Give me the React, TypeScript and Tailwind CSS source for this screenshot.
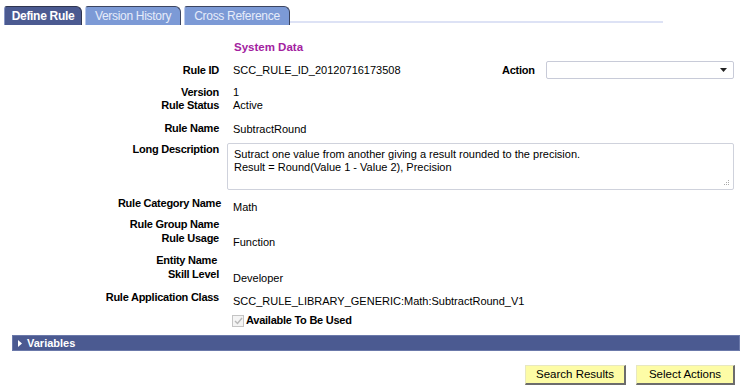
import React from "react";

const font = { fontFamily: '"Liberation Sans", Arial, sans-serif' };

function Label({ children, w = "w-[219px]" }: { children: React.ReactNode; w?: string }) {
  return (
    <div className={`${w} shrink-0 text-right font-bold text-[11px] leading-[13px] tracking-[-0.25px] text-black`}>
      {children}
    </div>
  );
}

function Tab({ label, active, w }: { label: string; active?: boolean; w: string }) {
  return (
    <div
      className={`${w} h-[19px] flex items-center justify-center whitespace-nowrap rounded-tr-[6px] rounded-tl-[3px] border-t border-r border-l text-[12px] tracking-[-0.3px] ${
        active
          ? "bg-[#4b5a91] border-t-[#2f3550] border-r-[#2f3550] border-l-[#8896c4] text-white font-bold"
          : "bg-[#7c9ad6] border-t-[#3c4560] border-r-[#3c4560] border-l-[#b8c8ee] text-[#e6ecfa]"
      }`}
    >
      {label}
    </div>
  );
}

export default function App() {
  return (
    <div className="w-[744px] h-[389px] bg-white text-black overflow-hidden" style={font}>
      {/* Tabs */}
      <div className="flex items-end pt-[4px] pl-[4px] h-[25px]">
        <div className="flex gap-[3px] items-end">
          <Tab label="Define Rule" active w="w-[78px]" />
          <Tab label="Version History" w="w-[96px]" />
          <Tab label="Cross Reference" w="w-[106px]" />
        </div>
        <div className="w-[373px] h-[2px] bg-[#dde2f5] mb-[2px]" />
      </div>

      {/* System Data */}
      <div className="mt-[15px] h-[14px] pl-[234px] text-[11.5px] leading-[14px] font-bold text-[#a3229f]">System Data</div>

      {/* Rule ID row */}
      <div className="mt-[7px] h-[18px] flex items-center">
        <Label>Rule ID</Label>
        <div className="ml-[14px] w-[269px] text-[11px] leading-[13px]">SCC_RULE_ID_20120716173508</div>
        <div className="w-[33px] font-bold text-[11px] leading-[13px] tracking-[-0.25px]">Action</div>
        <div className="ml-[11px] w-[188px] h-[18px] border border-[#c8cbd8] rounded-[2px] bg-white flex items-center justify-end pr-[6px]">
          <svg width="7" height="4" viewBox="0 0 7 4">
            <path d="M0 0 L7 0 L3.5 4 Z" fill="#222" />
          </svg>
        </div>
      </div>

      {/* Version / Status */}
      <div className="mt-[7px] flex">
        <Label>
          Version
          <br />
          Rule Status
        </Label>
        <div className="ml-[14px] text-[11px] leading-[13px]">
          1
          <br />
          Active
        </div>
      </div>

      {/* Rule Name */}
      <div className="mt-[10px] flex h-[13px]">
        <Label>Rule Name</Label>
        <div className="ml-[14px] text-[11px] leading-[13px] mt-[1px]">SubtractRound</div>
      </div>

      {/* Long description */}
      <div className="mt-[8px] flex">
        <Label>Long Description</Label>
        <div className="ml-[8px] relative w-[507px] h-[47px] border border-[#cfd2dc] rounded-[2px] pl-[6px] pt-[4px] text-[11px] leading-[13px]">
          Sutract one value from another giving a result rounded to the precision.
          <br />
          Result = Round(Value 1 - Value 2), Precision
          <svg className="absolute right-[3px] bottom-[3px]" width="6" height="6" viewBox="0 0 6 6">
            <rect x="4" y="0" width="1" height="1" fill="#aaa" />
            <rect x="2" y="2" width="1" height="1" fill="#aaa" />
            <rect x="4" y="2" width="1" height="1" fill="#aaa" />
            <rect x="0" y="4" width="1" height="1" fill="#aaa" />
            <rect x="2" y="4" width="1" height="1" fill="#aaa" />
            <rect x="4" y="4" width="1" height="1" fill="#aaa" />
          </svg>
        </div>
      </div>

      {/* Rule Category Name */}
      <div className="mt-[7px] flex h-[17px]">
        <Label w="w-[221px]">Rule Category Name</Label>
        <div className="ml-[12px] mt-[4px] text-[11px] leading-[13px]">Math</div>
      </div>

      <div className="mt-[4px] flex h-[13px]">
        <Label>Rule Group Name</Label>
      </div>

      <div className="mt-[1px] flex h-[17px]">
        <Label>Rule Usage</Label>
        <div className="ml-[14px] mt-[4px] text-[11px] leading-[13px]">Function</div>
      </div>

      <div className="mt-[5px] flex h-[13px]">
        <Label w="w-[217px]">Entity Name</Label>
      </div>

      <div className="mt-[1px] flex h-[17px]">
        <Label>Skill Level</Label>
        <div className="ml-[14px] mt-[4px] text-[11px] leading-[13px]">Developer</div>
      </div>

      <div className="mt-[6px] flex h-[17px]">
        <Label>Rule Application Class</Label>
        <div className="ml-[14px] mt-[4px] text-[11px] leading-[13px]">SCC_RULE_LIBRARY_GENERIC:Math:SubtractRound_V1</div>
      </div>

      {/* Checkbox */}
      <div className="mt-[6px] flex items-center h-[13px] pl-[232px]">
        <div className="w-[12px] h-[12px] border border-[#c4c4c4] bg-[#f4f4f4] flex items-center justify-center">
          <svg width="9" height="8" viewBox="0 0 9 8">
            <path d="M1 4 L3.5 6.5 L8 1" stroke="#b8b8b8" strokeWidth="1.4" fill="none" />
          </svg>
        </div>
        <div className="ml-[2px] font-bold text-[11px] leading-[13px] tracking-[-0.25px]">Available To Be Used</div>
      </div>

      {/* Variables bar */}
      <div className="mt-[8px] ml-[12px] w-[728px] h-[16px] bg-[#4b5a91] border border-[#6b79aa] flex items-center">
        <svg className="ml-[5px]" width="4" height="7" viewBox="0 0 4 7">
          <path d="M0 0 L4 3.5 L0 7 Z" fill="#fff" />
        </svg>
        <div className="ml-[5px] text-white font-bold text-[11px] leading-[14px]">Variables</div>
      </div>

      {/* Buttons */}
      <div className="mt-[14px] flex justify-end pr-[9px] gap-[10px]">
        <div className="w-[101px] h-[20px] bg-[#fdfca6] border-t border-l border-[#e8e8c0] border-r-2 border-b-2 border-r-[#6c6c6c] border-b-[#6c6c6c] flex items-center justify-center text-[11.5px]">
          Search Results
        </div>
        <div className="w-[99px] h-[20px] bg-[#fdfca6] border-t border-l border-[#e8e8c0] border-r-2 border-b-2 border-r-[#6c6c6c] border-b-[#6c6c6c] flex items-center justify-center text-[11.5px]">
          Select Actions
        </div>
      </div>
    </div>
  );
}
